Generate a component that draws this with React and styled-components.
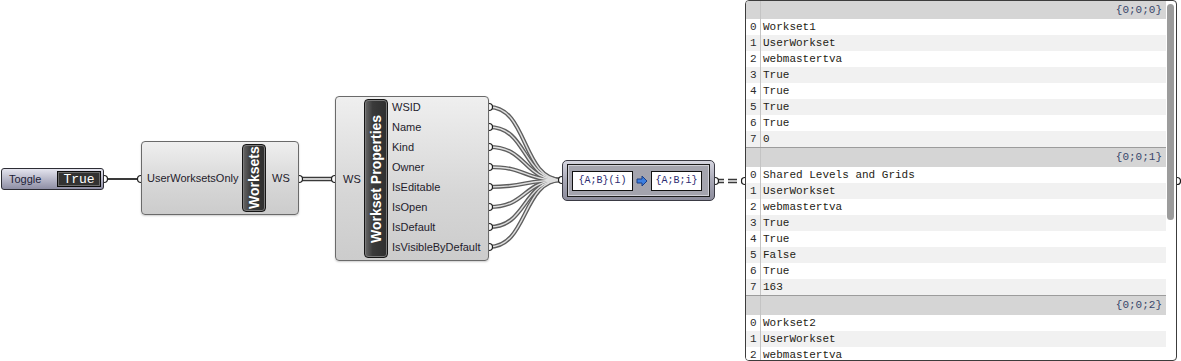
import React from "react";
import styled, { createGlobalStyle } from "styled-components";

const GlobalStyle = createGlobalStyle`
  body {
    margin: 0;
    background: #ffffff;
  }
`;

const worksetOutputs = [
  "WSID",
  "Name",
  "Kind",
  "Owner",
  "IsEditable",
  "IsOpen",
  "IsDefault",
  "IsVisibleByDefault"
];

const groups = [
  {
    path: "{0;0;0}",
    items: ["Workset1", "UserWorkset", "webmastertva", "True", "True", "True", "True", "0"]
  },
  {
    path: "{0;0;1}",
    items: ["Shared Levels and Grids", "UserWorkset", "webmastertva", "True", "True", "False", "True", "163"]
  },
  {
    path: "{0;0;2}",
    items: ["Workset2", "UserWorkset", "webmastertva"]
  }
];

export default function App() {
  const fanY = worksetOutputs.map((_, i) => 107 + i * 20);

  return (
    <Canvas>
      <GlobalStyle />
      <Wires width="1181" height="361">
        <ItemWire d="M104 179 L141 179" />
        <ListWire d="M299 179 L335 179" />
        <ListWireInner d="M299 179 L335 179" />
        {fanY.map(y => (
          <FanWire key={"o" + y} d={`M489 ${y} C 528 ${y}, 522 180, 562 180`} />
        ))}
        {fanY.map(y => (
          <FanWireInner key={"i" + y} d={`M489 ${y} C 528 ${y}, 522 180, 562 180`} />
        ))}
        <TreeWire d="M715 181 L745 181" />
        <TreeWireInner d="M715 181 L745 181" />
        {[
          [104, 179],
          [141, 179],
          [299, 179],
          [335, 179],
          [562, 180],
          [715, 181],
          [745, 181],
          [1177, 181],
          ...fanY.map(y => [489, y])
        ].map(([x, y]) => (
          <Grip key={x + "-" + y} cx={x} cy={y} r="3.5" />
        ))}
      </Wires>

      <Toggle>
        <ToggleLabel>Toggle</ToggleLabel>
        <ToggleValue>True</ToggleValue>
      </Toggle>

      <Component $x={141} $y={141} $w={158} $h={74}>
        <Params $w={100} $pad={5}>
          <ParamLabel>UserWorksetsOnly</ParamLabel>
        </Params>
        <Strip>Worksets</Strip>
        <Params $w={32} $pad={6}>
          <ParamLabel>WS</ParamLabel>
        </Params>
      </Component>

      <Component $x={335} $y={96} $w={154} $h={165}>
        <Params $w={28} $pad={7}>
          <ParamLabel>WS</ParamLabel>
        </Params>
        <Strip>Workset Properties</Strip>
        <Params $w={100} $pad={4} $top>
          {worksetOutputs.map(name => (
            <ParamLabel key={name}>{name}</ParamLabel>
          ))}
        </Params>
      </Component>

      <Mux>
        <MuxFrame>
          <MuxBox $w={61}>{"{A;B}(i)"}</MuxBox>
          <MuxArrow viewBox="0 0 12 12">
            <path d="M1 4 H6 V1 L11 6 L6 11 V8 H1 Z" fill="#3d7fe0" stroke="#1b3f86" strokeWidth="1" />
          </MuxArrow>
          <MuxBox $w={51}>{"{A;B;i}"}</MuxBox>
        </MuxFrame>
      </Mux>

      <Panel>
        {groups.map((g, gi) => (
          <React.Fragment key={g.path}>
            <HeaderRow $first={gi === 0}>
              <IndexCell />
              <PathCell>{g.path}</PathCell>
            </HeaderRow>
            {g.items.map((item, i) => (
              <Row key={i} $alt={i % 2 === 1}>
                <IndexCell>{i}</IndexCell>
                <ValueCell>{item}</ValueCell>
              </Row>
            ))}
          </React.Fragment>
        ))}
        <Scrollbar />
      </Panel>
    </Canvas>
  );
}

// Styles

const Canvas = styled.div`
  position: relative;
  width: 1181px;
  height: 361px;
  overflow: hidden;
  background: #ffffff;
  font-family: "Liberation Sans", Arial, sans-serif;
`;

const Wires = styled.svg`
  position: absolute;
  left: 0;
  top: 0;
  z-index: 0;
`;

const ItemWire = styled.path`
  fill: none;
  stroke: #3a3a3a;
  stroke-width: 2.2;
`;

const ListWire = styled.path`
  fill: none;
  stroke: #3a3a3a;
  stroke-width: 4.5;
`;

const ListWireInner = styled.path`
  fill: none;
  stroke: #ffffff;
  stroke-width: 1.4;
`;

const FanWire = styled.path`
  fill: none;
  stroke: #5e5e5e;
  stroke-width: 4.2;
`;

const FanWireInner = styled.path`
  fill: none;
  stroke: #dedede;
  stroke-width: 1.4;
`;

const TreeWire = styled.path`
  fill: none;
  stroke: #3a3a3a;
  stroke-width: 4.5;
  stroke-dasharray: 9 4;
`;

const TreeWireInner = styled.path`
  fill: none;
  stroke: #ffffff;
  stroke-width: 1.4;
`;

const Grip = styled.circle`
  fill: #ffffff;
  stroke: #1e1e1e;
  stroke-width: 1.2;
`;

const Toggle = styled.div`
  position: absolute;
  left: 1px;
  top: 168px;
  width: 103px;
  height: 22px;
  box-sizing: border-box;
  display: flex;
  align-items: center;
  justify-content: space-between;
  padding: 0 2px 0 7px;
  border: 1px solid #2c2c34;
  border-radius: 3px;
  background: linear-gradient(#e4e4ee, #b4b4c6 55%, #8e8ea4);
  z-index: 1;
`;

const ToggleLabel = styled.span`
  font-size: 11px;
  color: #1c1c36;
`;

const ToggleValue = styled.span`
  width: 44px;
  height: 16px;
  box-sizing: border-box;
  display: flex;
  align-items: center;
  justify-content: center;
  background: #323232;
  border: 1px solid #0c0c0c;
  box-shadow: inset 0 0 0 1px #6a6a6a;
  color: #ffffff;
  font-family: "Liberation Mono", "Courier New", monospace;
  font-size: 13px;
`;

const Component = styled.div`
  position: absolute;
  left: ${p => p.$x}px;
  top: ${p => p.$y}px;
  width: ${p => p.$w}px;
  height: ${p => p.$h}px;
  box-sizing: border-box;
  display: flex;
  align-items: stretch;
  border: 1px solid #6a6a6a;
  border-radius: 4px;
  background: linear-gradient(#efefef, #d6d6d6 60%, #cccccc);
  box-shadow: 0 1px 2px rgba(0, 0, 0, 0.2);
  z-index: 1;
`;

const Params = styled.div`
  width: ${p => p.$w}px;
  box-sizing: border-box;
  padding-left: ${p => p.$pad}px;
  display: flex;
  flex-direction: column;
  justify-content: ${p => (p.$top ? "flex-start" : "center")};
`;

const ParamLabel = styled.div`
  height: 20px;
  line-height: 20px;
  font-size: 11px;
  color: #241c2c;
  white-space: nowrap;
`;

const Strip = styled.div`
  width: 24px;
  margin: 2px 0;
  box-sizing: border-box;
  display: flex;
  align-items: center;
  justify-content: center;
  writing-mode: vertical-rl;
  transform: rotate(180deg);
  font-size: 14px;
  font-weight: bold;
  color: #ffffff;
  border: 1px solid #151515;
  border-radius: 4px;
  background: linear-gradient(to left, #676767, #3a3a3a 35%, #2e2e2e);
  box-shadow: inset 0 0 0 1px #7a7a7a;
  white-space: nowrap;
`;

const Mux = styled.div`
  position: absolute;
  left: 562px;
  top: 160px;
  width: 153px;
  height: 41px;
  box-sizing: border-box;
  padding: 3px 4px;
  border: 1px solid #3a3a44;
  border-radius: 5px;
  background: linear-gradient(#d6d6e0, #a8a8b6 50%, #8c8c9c);
  z-index: 1;
`;

const MuxFrame = styled.div`
  height: 100%;
  box-sizing: border-box;
  display: flex;
  align-items: center;
  gap: 3px;
  padding: 0 4px;
  border: 1px solid #1a1a1a;
  box-shadow: inset 0 0 0 1px #d0d0d8;
  background: #a4a4ae;
`;

const MuxBox = styled.div`
  width: ${p => p.$w}px;
  height: 20px;
  box-sizing: border-box;
  display: flex;
  align-items: center;
  justify-content: center;
  background: #ffffff;
  border: 1px solid #111111;
  font-family: "Liberation Mono", "Courier New", monospace;
  font-size: 10px;
  color: #2a2a70;
`;

const MuxArrow = styled.svg`
  width: 12px;
  height: 12px;
  flex: none;
`;

const Panel = styled.div`
  position: absolute;
  left: 745px;
  top: 0;
  width: 432px;
  height: 361px;
  box-sizing: border-box;
  padding-right: 10px;
  border: 1px solid #3c3c3c;
  border-radius: 4px;
  background: #ffffff;
  overflow: hidden;
  z-index: 1;
  font-family: "Liberation Mono", "Courier New", monospace;
  font-size: 11px;
`;

const Row = styled.div`
  display: grid;
  grid-template-columns: 15px 1fr;
  height: 16px;
  line-height: 16px;
  background: ${p => (p.$alt ? "#f1f1f1" : "#ffffff")};
  color: #1e2214;
`;

const HeaderRow = styled(Row)`
  height: ${p => (p.$first ? 18 : 19)}px;
  line-height: 18px;
  background: #d5d5d5;
  border-top: ${p => (p.$first ? "none" : "1px solid #9c9c9c")};
  color: #38466a;
`;

const IndexCell = styled.div`
  box-sizing: border-box;
  padding-left: 4px;
  border-right: 1px solid #c4c4c4;
  color: #2c2c2c;
`;

const ValueCell = styled.div`
  padding-left: 2px;
  white-space: nowrap;
`;

const PathCell = styled.div`
  text-align: right;
  padding-right: 4px;
`;

const Scrollbar = styled.div`
  position: absolute;
  right: 2px;
  top: 3px;
  width: 7px;
  height: 216px;
  border-radius: 4px;
  background: #9c9c9c;
`;
